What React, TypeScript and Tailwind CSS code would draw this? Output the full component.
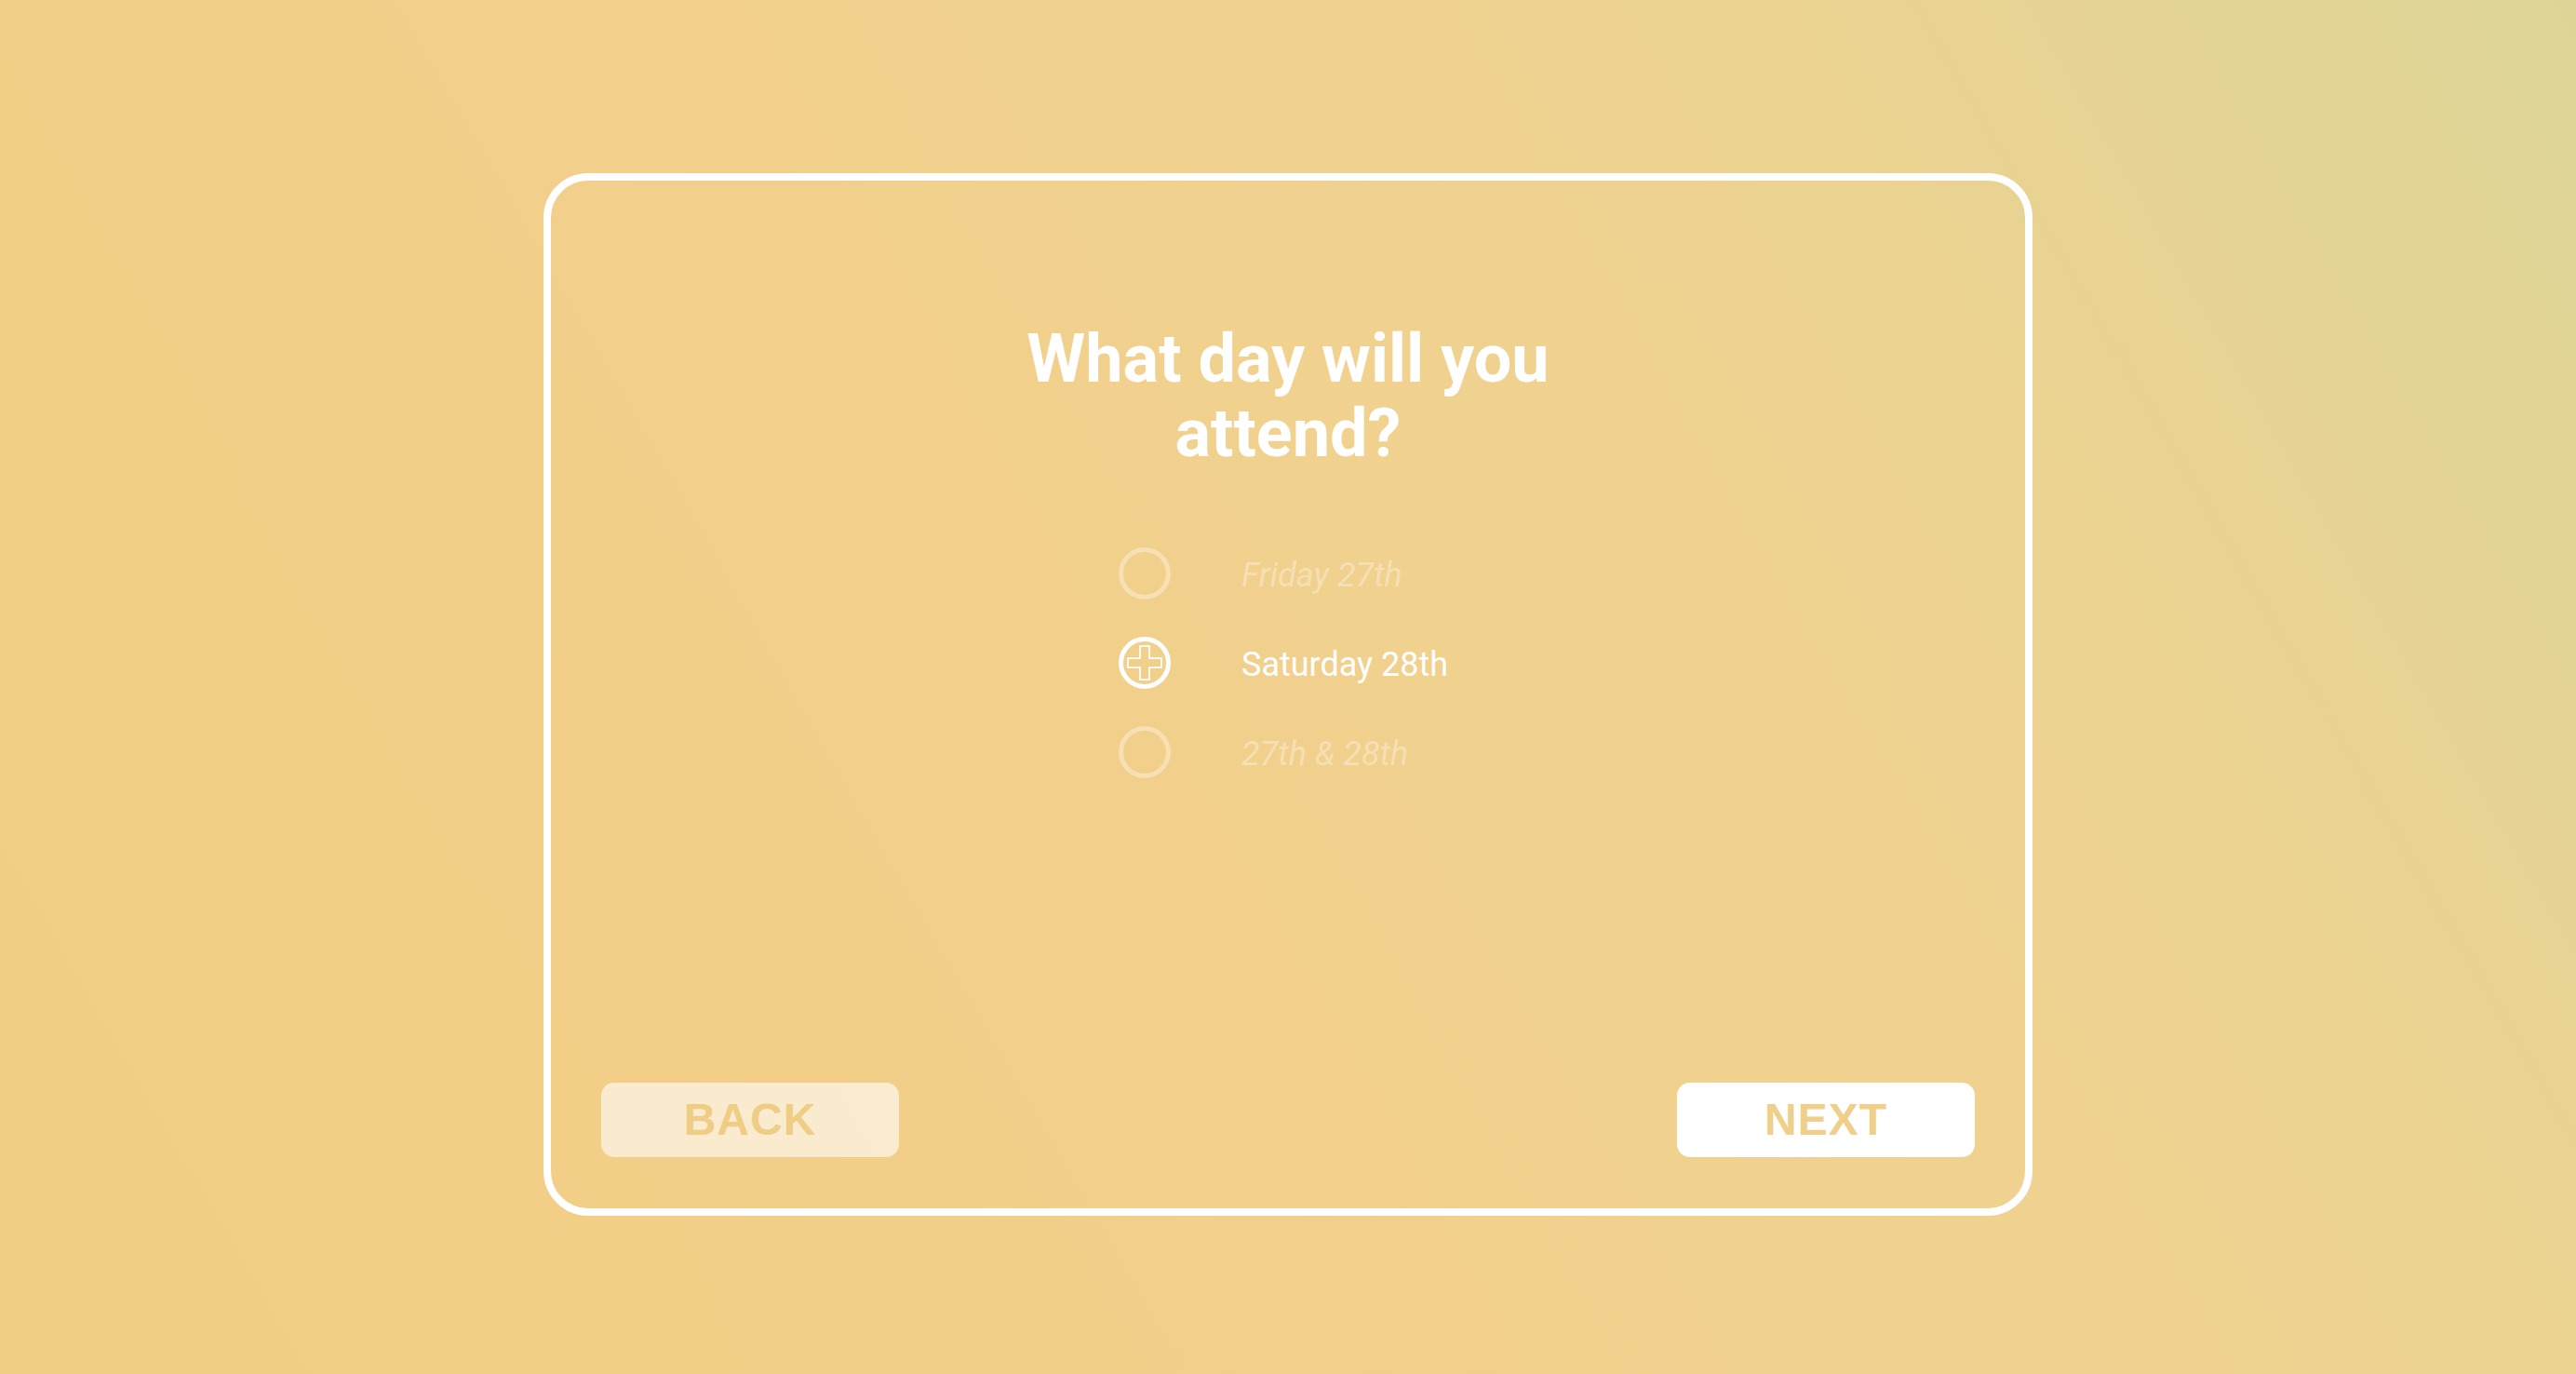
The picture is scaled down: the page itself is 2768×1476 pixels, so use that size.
const options = [
  { label: "Friday 27th", selected: false },
  { label: "Saturday 28th", selected: true },
  { label: "27th & 28th", selected: false },
];

function Radio({ selected }: { selected: boolean }) {
  if (!selected) {
    return (
      <div className="h-[56px] w-[56px] shrink-0 rounded-full border-[5px] border-white/35" />
    );
  }
  return (
    <div className="flex h-[56px] w-[56px] shrink-0 items-center justify-center rounded-full border-[5px] border-white">
      <svg viewBox="0 0 40 40" className="h-[40px] w-[40px]">
        <path
          d="M15 2h10v13h13v10H25v13H15V25H2V15h13z"
          fill="none"
          stroke="white"
          strokeWidth="1.75"
        />
      </svg>
    </div>
  );
}

export default function App() {
  return (
    <div className="flex min-h-screen w-full items-center justify-center bg-[linear-gradient(60deg,#f2cd84_0%,#f2cf8a_38%,#f0d290_62%,#ebd291_76%,#ddd597_100%)] pt-[16px]">
      <div className="flex h-[1120px] w-[1600px] flex-col rounded-[48px] border-[8px] border-white px-[54px] pb-[55px] pt-[152px]">
        <h1 className="mx-auto max-w-[600px] text-center font-['Roboto',sans-serif] text-[72px] font-bold leading-[80px] text-white">
          What day will you attend?
        </h1>

        <div className="ml-[556px] mt-[82px] flex flex-col gap-[40px]">
          {options.map((o) => (
            <div key={o.label} className="flex items-center gap-[76px]">
              <Radio selected={o.selected} />
              <span
                className={
                  o.selected
                    ? "mt-1 font-['Roboto',sans-serif] text-[36px] leading-none text-white"
                    : "mt-1 font-['Roboto',sans-serif] text-[36px] italic leading-none text-white/35"
                }
              >
                {o.label}
              </span>
            </div>
          ))}
        </div>

        <div className="mt-auto flex items-center justify-between">
          <button className="flex h-[80px] w-[320px] items-center justify-center rounded-[14px] bg-white/60 font-['Liberation_Sans',Arial,sans-serif] text-[48px] font-bold tracking-[1px] text-[#efcd85]">
            BACK
          </button>
          <button className="flex h-[80px] w-[320px] items-center justify-center rounded-[14px] bg-white font-['Liberation_Sans',Arial,sans-serif] text-[48px] font-bold tracking-[1px] text-[#efcf8a]">
            NEXT
          </button>
        </div>
      </div>
    </div>
  );
}
